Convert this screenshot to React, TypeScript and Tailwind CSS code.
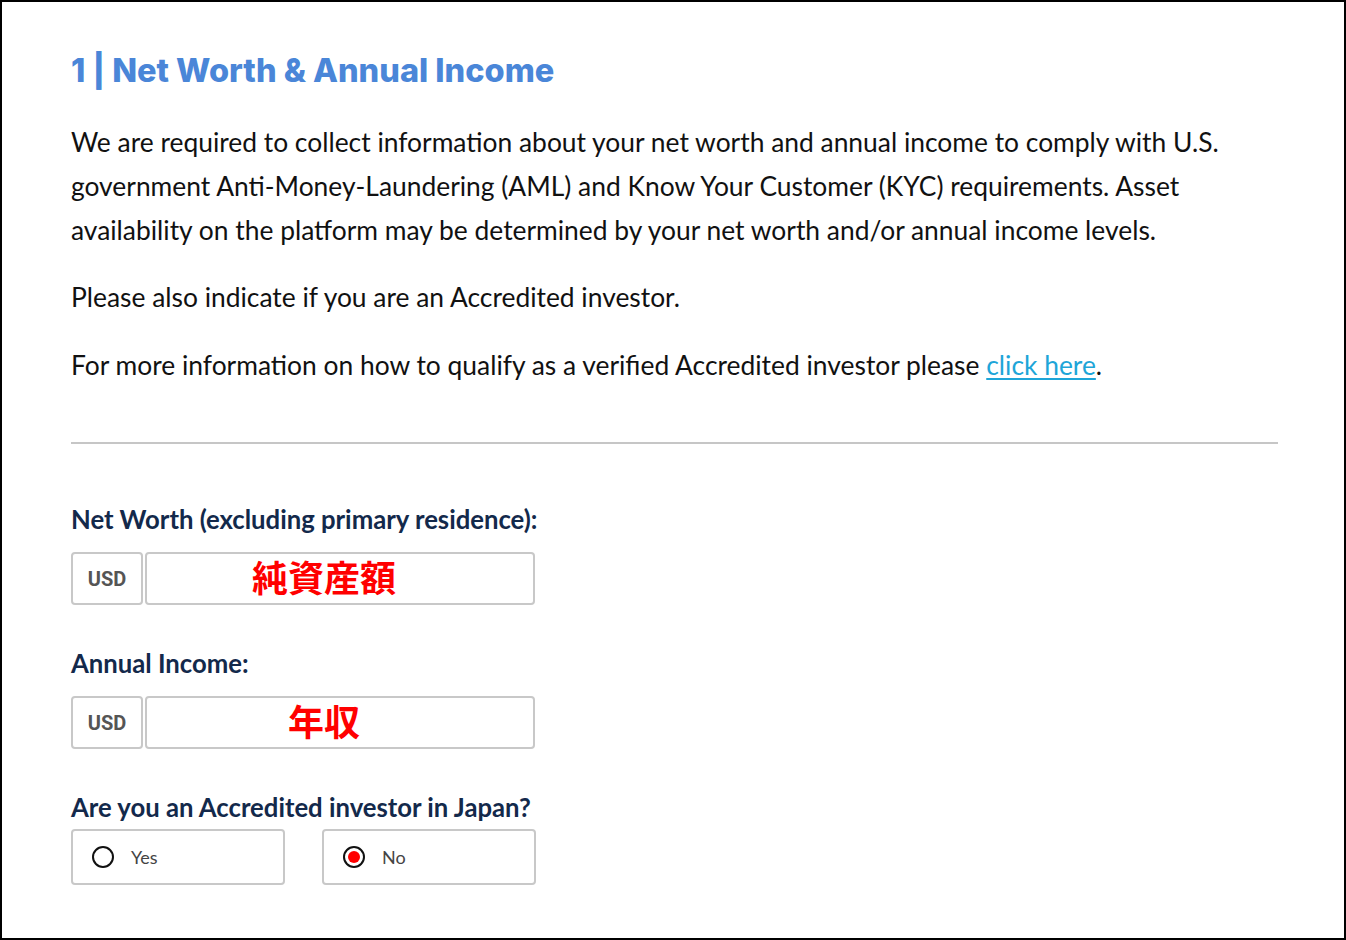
export default function App() {
    const lato = { fontFamily: "Lato, 'Noto Sans', sans-serif" };

    return (
        <div className="w-full h-[940px] border-2 border-black bg-white pt-[49px] pl-[69px] pr-[66px]" style={lato}>
            <h2 className="text-[32.5px] leading-[40px] font-extrabold text-[#4a86d8]" style={{ fontFamily: "Inter, 'Open Sans', sans-serif" }}>
                1 | Net Worth &amp; Annual Income
            </h2>

            <p className="mt-[29px] text-[26.4px] leading-[44px] text-[#111]">
                We are required to collect information about your net worth and annual income to comply with U.S. government Anti-Money-Laundering (AML) and Know Your Customer (KYC) requirements. Asset availability on the platform may be determined by your net worth and/or annual income levels.
            </p>
            <p className="mt-[23px] text-[26.4px] leading-[44px] text-[#111]">
                Please also indicate if you are an Accredited investor.
            </p>
            <p className="mt-[24px] text-[26.4px] leading-[44px] text-[#111]">
                For more information on how to qualify as a verified Accredited investor please{" "}
                <a href="#" className="text-[#1ea5d8] underline underline-offset-[3px]">click here</a>.
            </p>

            <div className="mt-[55px] h-[2px] bg-[#c6c6c6]" />

            <div className="mt-[59px] text-[25.7px] leading-[32px] font-bold text-[#13294b]">
                Net Worth (excluding primary residence):
            </div>
            <div className="mt-[17px] flex gap-[2px] w-[464px] h-[53px]">
                <div className="w-[72px] flex items-center justify-center border-2 border-[#c8c8c8] rounded-[4px] text-[20px] font-bold text-[#555]" style={{ fontFamily: "Roboto, sans-serif" }}>USD</div>
                <div className="flex-1 flex items-center justify-center pr-[32px] pb-[5px] border-2 border-[#c8c8c8] rounded-[4px] text-[36px] font-bold text-[#ff0000]" style={{ fontFamily: "'Noto Sans CJK JP', sans-serif" }}>純資産額</div>
            </div>

            <div className="mt-[42px] text-[25.7px] leading-[32px] font-bold text-[#13294b]">
                Annual Income:
            </div>
            <div className="mt-[17px] flex gap-[2px] w-[464px] h-[53px]">
                <div className="w-[72px] flex items-center justify-center border-2 border-[#c8c8c8] rounded-[4px] text-[20px] font-bold text-[#555]" style={{ fontFamily: "Roboto, sans-serif" }}>USD</div>
                <div className="flex-1 flex items-center justify-center pr-[32px] pb-[5px] border-2 border-[#c8c8c8] rounded-[4px] text-[36px] font-bold text-[#ff0000]" style={{ fontFamily: "'Noto Sans CJK JP', sans-serif" }}>年収</div>
            </div>

            <div className="mt-[42px] text-[25.7px] leading-[32px] font-bold text-[#13294b]">
                Are you an Accredited investor in Japan?
            </div>
            <div className="mt-[6px] flex gap-[37px]">
                {[
                    { label: "Yes", checked: false },
                    { label: "No", checked: true },
                ].map(o => (
                    <div key={o.label} className="w-[214px] h-[56px] flex items-center pl-[19px] border-2 border-[#c8c8c8] rounded-[4px]">
                        <span className="w-[22px] h-[22px] rounded-full border-2 border-[#111] flex items-center justify-center">
                            {o.checked && <span className="w-[12px] h-[12px] rounded-full bg-[#ff0000]" />}
                        </span>
                        <span className="ml-[17px] text-[18px] text-[#444]">{o.label}</span>
                    </div>
                ))}
            </div>
        </div>
    );
}
